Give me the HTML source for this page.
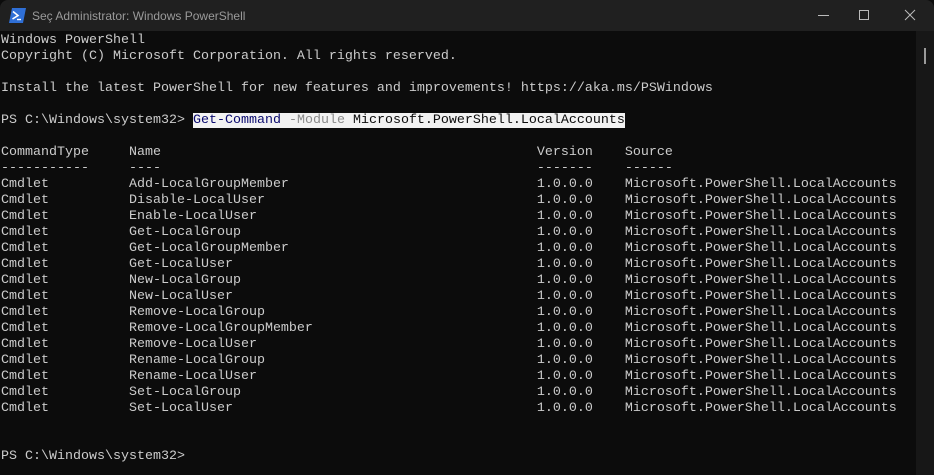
<!DOCTYPE html>
<html><head><style>
html,body{margin:0;padding:0;width:934px;height:475px;overflow:hidden;background:#0c0c0c;}
.title{position:absolute;left:0;top:0;width:934px;height:31px;background:#202020;border-radius:8px 8px 0 0;}
.title .t{position:absolute;left:32px;top:9px;font:12px "Liberation Sans",sans-serif;color:#9a9a9a;}
.term{position:absolute;left:1px;top:33px;font-family:"Liberation Mono",monospace;font-size:13.33px;line-height:16px;color:#cccccc;white-space:pre;}
.sb{position:absolute;left:916px;top:31px;width:18px;height:444px;background:#171717;}
.thumb{position:absolute;left:924px;top:48px;width:2px;height:16px;background:#9a9a9a;}
.hl{background:#f2f2f2;color:#0c0c0c;}
.b{color:#0a0a6e}.g{color:#8a8a8a}
</style></head><body>
<div class="title">
<svg style="position:absolute;left:9px;top:8px" width="17" height="15" viewBox="0 0 17 15"><path d="M3 0H17L14 15H0Z" fill="#2f6fd6"/><path d="M4 3.5L9 7.5L3.5 11" stroke="#fff" stroke-width="1.6" fill="none"/><path d="M8 11.5H12" stroke="#fff" stroke-width="1.4"/></svg>
<div class="t">Seç Administrator: Windows PowerShell</div>
<svg style="position:absolute;left:800px;top:8px" width="130" height="16"><path d="M18 7.5H29" stroke="#bbb" stroke-width="1"/><rect x="59.5" y="2.5" width="9" height="9" fill="none" stroke="#bbb"/><path d="M105 2L115 12M115 2L105 12" stroke="#bbb"/></svg>
</div>
<div class="sb"></div><div class="thumb"></div>
<div class="term">Windows PowerShell
Copyright (C) Microsoft Corporation. All rights reserved.

Install the latest PowerShell for new features and improvements! https://aka.ms/PSWindows

PS C:\Windows\system32> <span class="hl"><span class="b">Get-Command</span> <span class="g">-Module</span> Microsoft.PowerShell.LocalAccounts</span>

CommandType     Name                                               Version    Source
-----------     ----                                               -------    ------
Cmdlet          Add-LocalGroupMember                               1.0.0.0    Microsoft.PowerShell.LocalAccounts
Cmdlet          Disable-LocalUser                                  1.0.0.0    Microsoft.PowerShell.LocalAccounts
Cmdlet          Enable-LocalUser                                   1.0.0.0    Microsoft.PowerShell.LocalAccounts
Cmdlet          Get-LocalGroup                                     1.0.0.0    Microsoft.PowerShell.LocalAccounts
Cmdlet          Get-LocalGroupMember                               1.0.0.0    Microsoft.PowerShell.LocalAccounts
Cmdlet          Get-LocalUser                                      1.0.0.0    Microsoft.PowerShell.LocalAccounts
Cmdlet          New-LocalGroup                                     1.0.0.0    Microsoft.PowerShell.LocalAccounts
Cmdlet          New-LocalUser                                      1.0.0.0    Microsoft.PowerShell.LocalAccounts
Cmdlet          Remove-LocalGroup                                  1.0.0.0    Microsoft.PowerShell.LocalAccounts
Cmdlet          Remove-LocalGroupMember                            1.0.0.0    Microsoft.PowerShell.LocalAccounts
Cmdlet          Remove-LocalUser                                   1.0.0.0    Microsoft.PowerShell.LocalAccounts
Cmdlet          Rename-LocalGroup                                  1.0.0.0    Microsoft.PowerShell.LocalAccounts
Cmdlet          Rename-LocalUser                                   1.0.0.0    Microsoft.PowerShell.LocalAccounts
Cmdlet          Set-LocalGroup                                     1.0.0.0    Microsoft.PowerShell.LocalAccounts
Cmdlet          Set-LocalUser                                      1.0.0.0    Microsoft.PowerShell.LocalAccounts


PS C:\Windows\system32></div>
</body></html>
